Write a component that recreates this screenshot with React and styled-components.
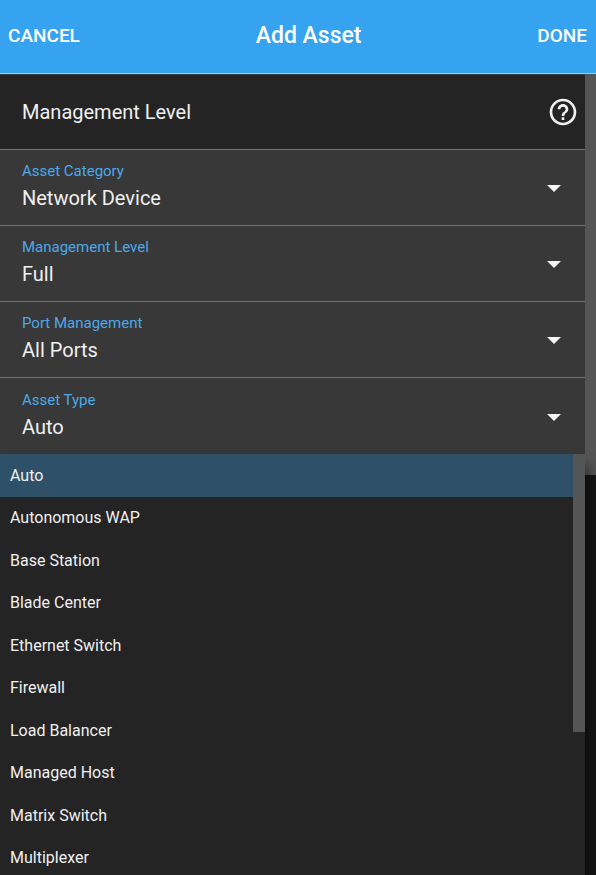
import React, { useState } from 'react';
import styled, { createGlobalStyle } from 'styled-components';
import { MdHelpOutline } from 'react-icons/md';

const GlobalStyle = createGlobalStyle`
  * {
    box-sizing: border-box;
  }
  body {
    margin: 0;
    background-color: #242424;
    color: #f0f0f0;
    font-family: Roboto, sans-serif;
  }
  button, select {
    font-family: inherit;
    color: inherit;
  }
`;

const Page = styled.div`
  display: flex;
  flex-direction: column;
  height: 100vh;
  overflow: hidden;
`;

const Header = styled.header`
  display: flex;
  align-items: center;
  justify-content: space-between;
  height: 74px;
  flex: none;
  padding: 0 9px 2px 8px;
  background-color: #35a3ef;
  border-bottom: 1px solid #b9c4cc;
  color: #fff;
`;

const Title = styled.h1`
  margin: 0;
  font-size: 23px;
  font-weight: 500;
  line-height: 28px;
`;

const HeaderButton = styled.button`
  padding: 0;
  border: 0;
  background: none;
  font-size: 19px;
  font-weight: 500;
  line-height: 28px;
  cursor: pointer;
`;

const Body = styled.div`
  display: grid;
  grid-template-columns: minmax(0, 1fr) 11px;
  flex: 1;
  min-height: 0;
`;

const Track = styled.div`
  background-color: #161616;
`;

const Thumb = styled.div`
  height: 50%;
  background-color: #555;
`;

const SectionHeading = styled.div`
  display: flex;
  align-items: center;
  justify-content: space-between;
  height: 76px;
  padding: 0 6px 0 22px;
  border-top: 1px solid #3c3c3c;
  border-bottom: 1px solid #727272;
  background-color: #242424;
`;

const SectionTitle = styled.h2`
  margin: 0;
  font-size: 20px;
  font-weight: 400;
  line-height: 24px;
`;

const HelpButton = styled.button`
  display: flex;
  padding: 0;
  border: 0;
  background: none;
  cursor: pointer;
`;

const FieldRow = styled.div`
  position: relative;
  display: flex;
  align-items: center;
  height: 76px;
  border-bottom: 1px solid #727272;
  background-color: #383838;
  &:last-child {
    border-bottom: 0;
  }
`;

const FieldText = styled.div`
  display: flex;
  flex-direction: column;
  flex: 1;
  gap: 3px;
  padding: 0 0 2px 22px;
`;

const FieldLabel = styled.label`
  color: #4aa9ea;
  font-size: 15px;
  line-height: 20px;
`;

const FieldSelect = styled.select`
  appearance: none;
  width: 100%;
  height: 28px;
  padding: 0;
  border: 0;
  outline: 0;
  background: none;
  font-size: 20px;
  line-height: 28px;
  cursor: pointer;
  option {
    background-color: #242424;
  }
`;

const Caret = styled.span`
  width: 0;
  height: 0;
  margin: 2px 24px 0 0;
  border: 7px solid transparent;
  border-top-color: #f4f4f4;
  border-bottom: 0;
  pointer-events: none;
`;

const Menu = styled.div`
  position: absolute;
  z-index: 1;
  top: 100%;
  left: 0;
  right: 0;
  display: grid;
  grid-template-columns: minmax(0, 1fr) 12px;
  background-color: #242424;
  box-shadow: 0 12px 14px rgba(0, 0, 0, 0.8);
`;

const OptionList = styled.ul`
  margin: 0;
  padding: 0;
  list-style: none;
`;

const Option = styled.li`
  display: flex;
  align-items: center;
  height: 43px;
  padding: 0 10px;
  background-color: ${props => (props.$selected ? '#2e5068' : '#242424')};
  font-size: 16px;
  line-height: 20px;
  cursor: pointer;
  &:nth-child(even) {
    height: 42px;
  }
`;

const MenuThumb = styled.div`
  height: 278px;
  background-color: #555;
`;

const assetTypes = [
  'Auto',
  'Autonomous WAP',
  'Base Station',
  'Blade Center',
  'Ethernet Switch',
  'Firewall',
  'Load Balancer',
  'Managed Host',
  'Matrix Switch',
  'Multiplexer',
];

const Field = ({ id, label, children, menu, ...rest }) => (
  <FieldRow>
    <FieldText>
      <FieldLabel htmlFor={id}>{label}</FieldLabel>
      <FieldSelect id={id} {...rest}>{children}</FieldSelect>
    </FieldText>
    <Caret />
    {menu}
  </FieldRow>
);

const App = () => {
  const [type, setType] = useState('Auto');
  const [open, setOpen] = useState(true);

  const pick = (name) => {
    setType(name);
    setOpen(false);
  };

  // the asset type list replaces the native popup
  const toggle = (e) => {
    e.preventDefault();
    setOpen(!open);
  };

  const menu = open && (
    <Menu>
      <OptionList role="listbox" aria-label="Asset Type">
        {assetTypes.map(name => (
          <Option
            key={name}
            role="option"
            aria-selected={name === type}
            $selected={name === type}
            onClick={() => pick(name)}
          >
            {name}
          </Option>
        ))}
      </OptionList>
      <MenuThumb />
    </Menu>
  );

  return (
    <Page>
      <GlobalStyle />
      <Header>
        <HeaderButton type="button">CANCEL</HeaderButton>
        <Title>Add Asset</Title>
        <HeaderButton type="button">DONE</HeaderButton>
      </Header>
      <Body>
        <main>
          <SectionHeading>
            <SectionTitle>Management Level</SectionTitle>
            <HelpButton type="button" aria-label="Help">
              <MdHelpOutline size={32} />
            </HelpButton>
          </SectionHeading>
          <Field id="category" label="Asset Category">
            <option>Network Device</option>
          </Field>
          <Field id="level" label="Management Level">
            <option>Full</option>
          </Field>
          <Field id="ports" label="Port Management">
            <option>All Ports</option>
          </Field>
          <Field
            id="type"
            label="Asset Type"
            value={type}
            onChange={e => setType(e.target.value)}
            onMouseDown={toggle}
            menu={menu}
          >
            {assetTypes.map(name => <option key={name}>{name}</option>)}
          </Field>
        </main>
        <Track>
          <Thumb />
        </Track>
      </Body>
    </Page>
  );
};

export default App;
